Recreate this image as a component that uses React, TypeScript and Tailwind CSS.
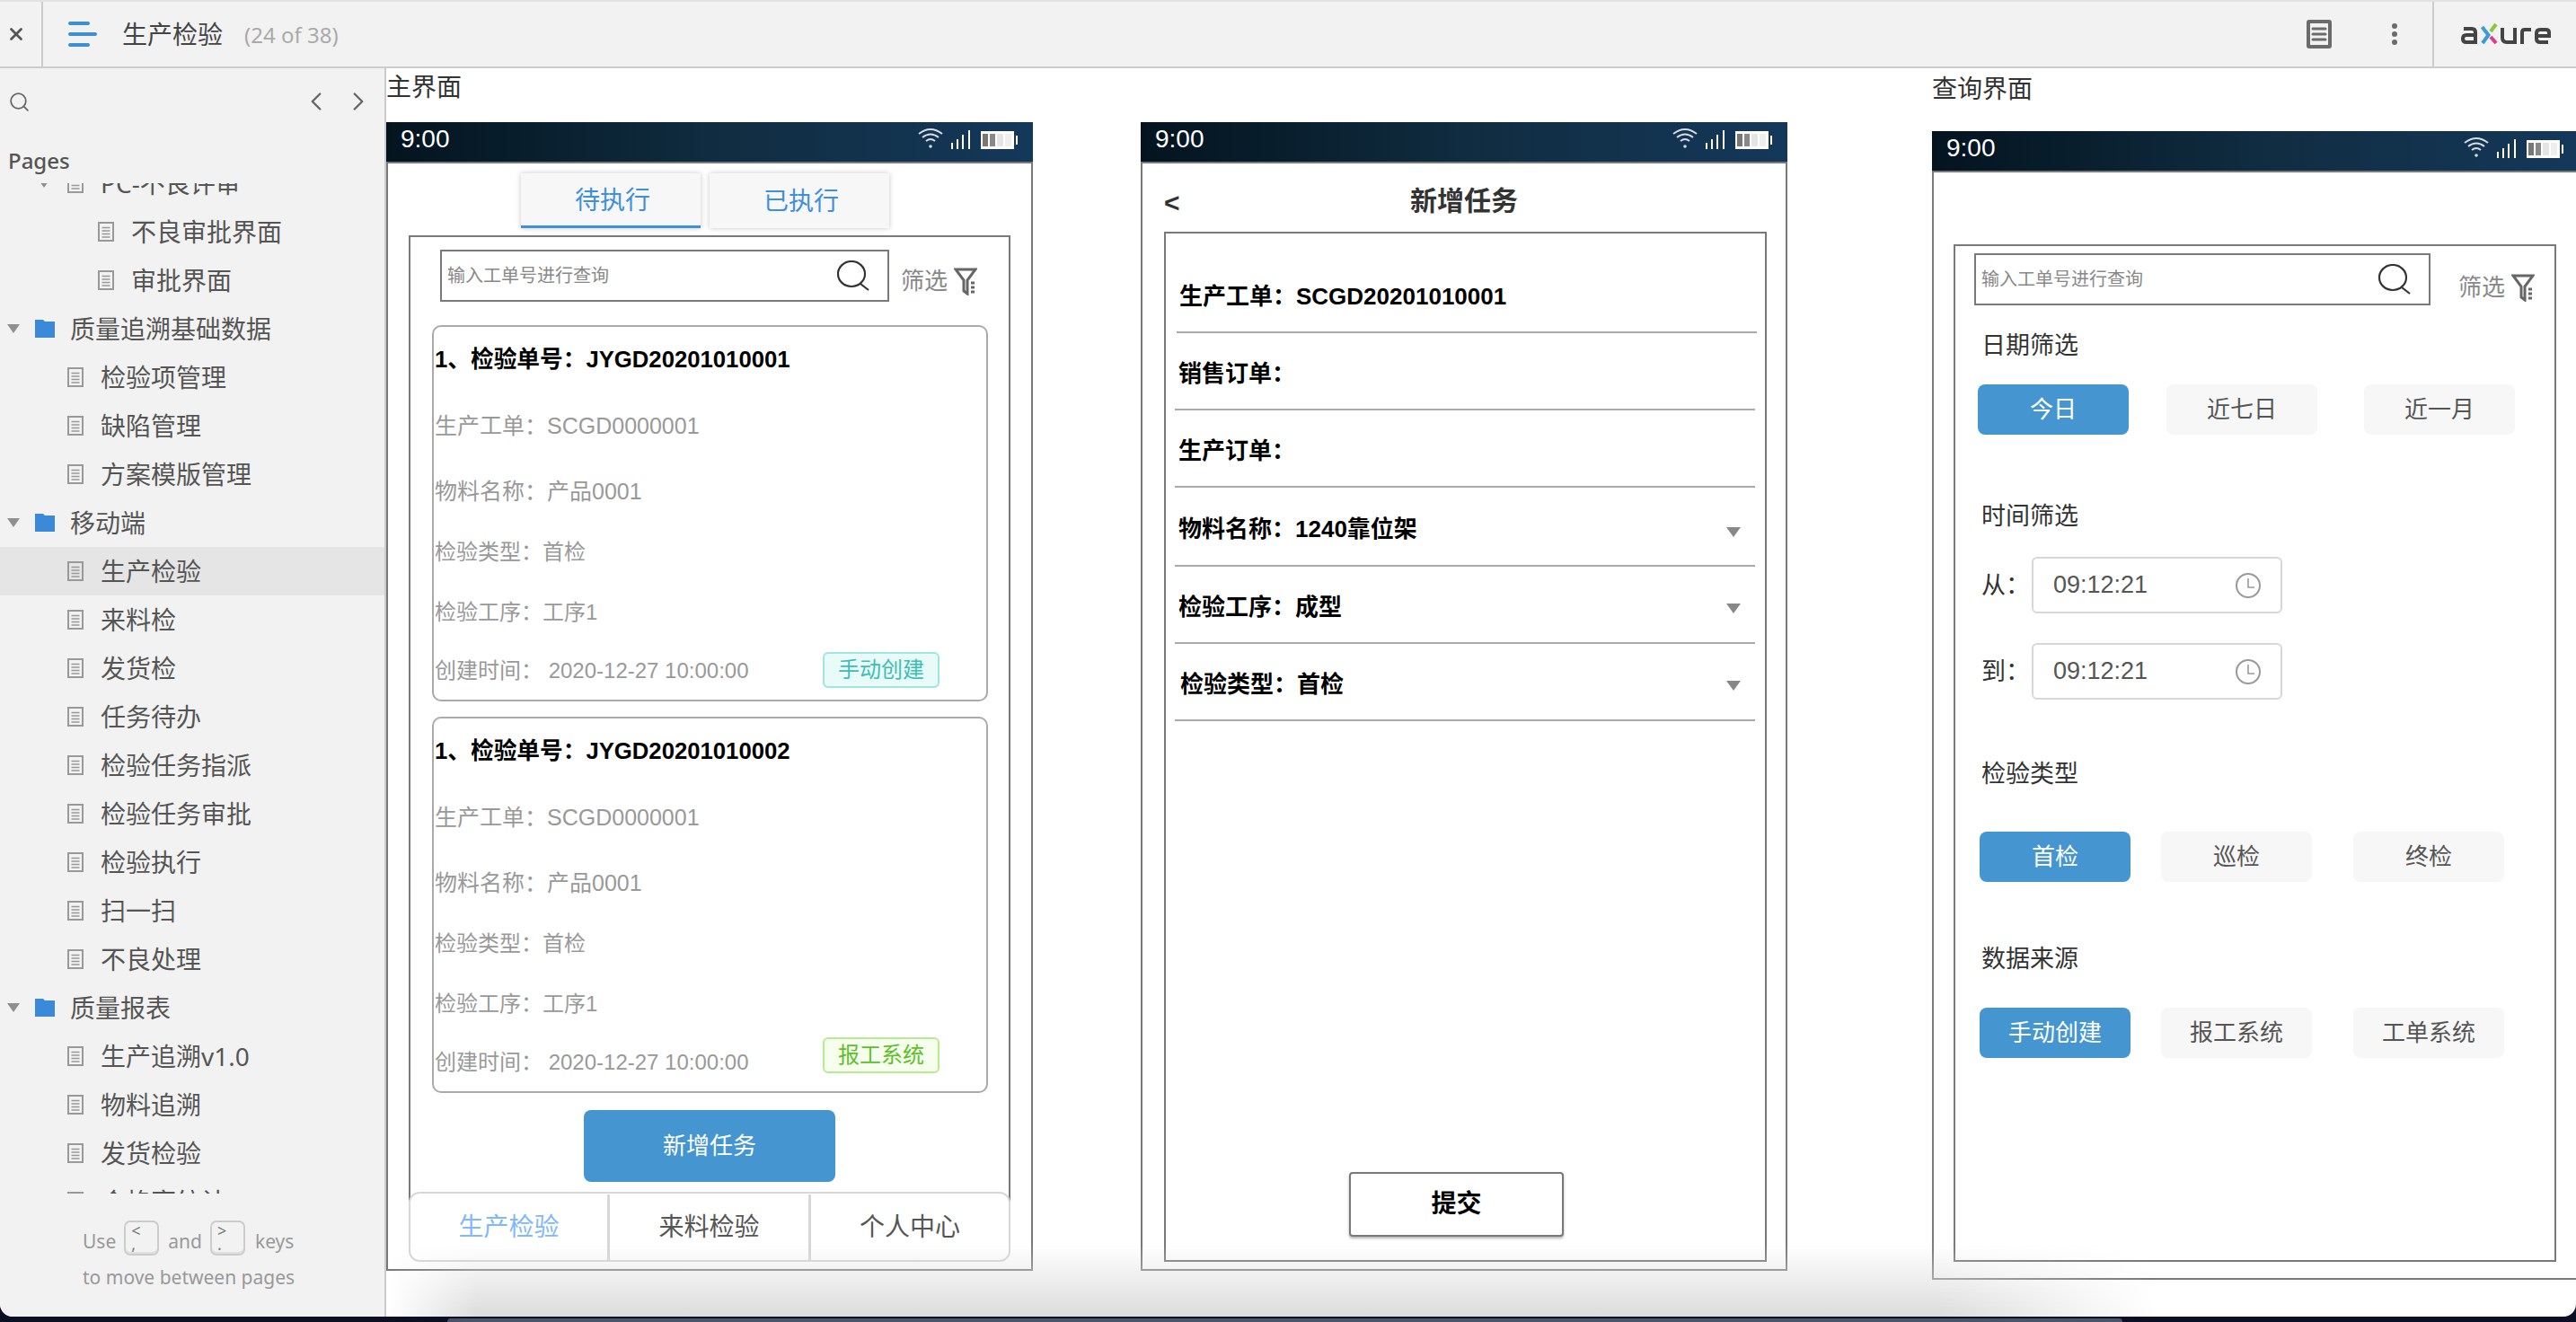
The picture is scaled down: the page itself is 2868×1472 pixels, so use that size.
import { ChevronLeft, ChevronRight, Search, X } from 'lucide-react'

const chromeFont = "font-['Noto_Sans','Noto_Sans_CJK_SC',sans-serif]"
const phoneFont = "font-['Liberation_Sans','Noto_Sans_CJK_SC',sans-serif]"

type Row = { label: string; kind: 'folder' | 'page' | 'sub' | 'branch'; active?: boolean }

const rows: Row[] = [
  { label: 'PC-不良评审', kind: 'branch' },
  { label: '不良审批界面', kind: 'sub' },
  { label: '审批界面', kind: 'sub' },
  { label: '质量追溯基础数据', kind: 'folder' },
  { label: '检验项管理', kind: 'page' },
  { label: '缺陷管理', kind: 'page' },
  { label: '方案模版管理', kind: 'page' },
  { label: '移动端', kind: 'folder' },
  { label: '生产检验', kind: 'page', active: true },
  { label: '来料检', kind: 'page' },
  { label: '发货检', kind: 'page' },
  { label: '任务待办', kind: 'page' },
  { label: '检验任务指派', kind: 'page' },
  { label: '检验任务审批', kind: 'page' },
  { label: '检验执行', kind: 'page' },
  { label: '扫一扫', kind: 'page' },
  { label: '不良处理', kind: 'page' },
  { label: '质量报表', kind: 'folder' },
  { label: '生产追溯v1.0', kind: 'page' },
  { label: '物料追溯', kind: 'page' },
  { label: '发货检验', kind: 'page' },
  { label: '合格率统计', kind: 'page' },
]

function DocIcon() {
  return (
    <svg width="18" height="22" viewBox="0 0 18 22" className="shrink-0">
      <rect x="1" y="1" width="16" height="20" fill="none" stroke="#999" strokeWidth="2" />
      <path d="M4.5 6.5h9M4.5 10h9M4.5 13.5h9M4.5 17h9" stroke="#999" strokeWidth="1.4" />
    </svg>
  )
}

function FolderIcon() {
  return (
    <svg width="22" height="20" viewBox="0 0 22 20" className="shrink-0">
      <path d="M0 0h9l2 2h11v18H0z" fill="#3b8ad9" />
    </svg>
  )
}

function Caret() {
  return <div className="h-0 w-0 shrink-0 border-x-[7px] border-t-[10px] border-x-transparent border-t-[#8f8f8f]" />
}

function TreeRow({ row }: { row: Row }) {
  return (
    <div className={`flex h-[54px] items-center text-[28px] leading-[40px] text-[#555] ${row.active ? 'bg-[#e5e5e5]' : ''}`}>
      {row.kind === 'folder' && (
        <div className="flex items-center pl-[8px]">
          <Caret />
          <div className="ml-[17px]"><FolderIcon /></div>
          <span className="ml-[17px] whitespace-nowrap">{row.label}</span>
        </div>
      )}
      {row.kind === 'page' && (
        <div className="flex items-center pl-[75px]">
          <DocIcon />
          <span className="ml-[19px] whitespace-nowrap">{row.label}</span>
        </div>
      )}
      {row.kind === 'branch' && (
        <div className="flex items-center pl-[42px]">
          <Caret />
          <div className="ml-[19px]"><DocIcon /></div>
          <span className="ml-[19px] whitespace-nowrap">{row.label}</span>
        </div>
      )}
      {row.kind === 'sub' && (
        <div className="flex items-center pl-[109px]">
          <DocIcon />
          <span className="ml-[19px] whitespace-nowrap">{row.label}</span>
        </div>
      )}
    </div>
  )
}

function KeyCap({ top, bottom }: { top: string; bottom: string }) {
  return (
    <div className="flex h-[39px] w-[39px] flex-col rounded-[7px] border-2 border-[#ccc] pl-[6px] text-[18px] leading-[15px] text-[#777] shadow-[inset_0_-2px_0_#e0e0e0]">
      <span className="mt-[2px]">{top}</span>
      <span>{bottom}</span>
    </div>
  )
}

function Sidebar() {
  return (
    <aside className={`flex h-full w-[430px] shrink-0 flex-col rounded-bl-[14px] border-r-2 border-[#ccc] bg-[#f2f2f2] ${chromeFont}`}>
      <div className="flex h-[72px] items-center pt-[2px] pl-[9px] text-[#666]">
        <Search size={25} strokeWidth={1.7} />
        <ChevronLeft size={34} strokeWidth={1.7} className="ml-[301px]" />
        <ChevronRight size={34} strokeWidth={1.7} className="ml-[13px]" />
      </div>
      <div className="flex h-[56px] items-start pl-[9px] text-[24px] leading-[56px] font-medium text-[#555]">
        <span className="mt-[3px]">Pages</span>
      </div>
      <div className="h-[1125px] shrink-0 overflow-hidden">
        <div className="-mt-[27px]">
          {rows.map((row) => (
            <TreeRow key={row.label} row={row} />
          ))}
        </div>
      </div>
      <div className="pt-[30px] pl-[92px] text-[21px] leading-[30px] text-[#999]">
        <div className="flex items-center whitespace-nowrap">
          <span className="mt-[6px]">Use</span>
          <div className="ml-[9px]"><KeyCap top="<" bottom="," /></div>
          <span className="mt-[6px] ml-[10px]">and</span>
          <div className="ml-[9px]"><KeyCap top=">" bottom="." /></div>
          <span className="mt-[6px] ml-[11px]">keys</span>
        </div>
        <div className="mt-[9px] whitespace-nowrap">to move between pages</div>
      </div>
    </aside>
  )
}

function AxureLogo() {
  return (
    <svg width="100" height="26" viewBox="0 0 100 26" fill="none" strokeWidth="4">
      <path d="M3 7h9q4 0 4 4v11H6q-4 0-4-4t4-4h10" stroke="#444" />
      <path d="M23.500 5l7 9-6.500 9" stroke="#3c9ad8" />
      <path d="M39 2l-6 8" stroke="#8cc63f" />
      <path d="M33 16l6 7" stroke="#e0388c" />
      <path d="M46 6v11q0 5 5 5h9V6" stroke="#444" />
      <path d="M68 24V11q0-3 3-3h7" stroke="#444" />
      <path d="M84 15h14v-4q0-3-4-3h-6q-4 0-4 4v6q0 4 4 4h9" stroke="#444" />
    </svg>
  )
}

function TopBar() {
  return (
    <header className={`flex h-[76px] shrink-0 items-center border-t-2 border-b-2 border-t-[#e2e2e2] border-b-[#ccc] bg-[#f2f2f2] ${chromeFont}`}>
      <div className="flex h-full w-[48px] items-center border-r-2 border-[#ccc] pl-[7px] text-[#555]">
        <X size={22} strokeWidth={3} />
      </div>
      <div className="ml-[28px] flex w-[32px] flex-col gap-[8px]">
        <div className="h-[4px] w-[24px] rounded-full bg-[#3d8fd1]" />
        <div className="h-[4px] w-[32px] rounded-full bg-[#3d8fd1]" />
        <div className="h-[4px] w-[24px] rounded-full bg-[#3d8fd1]" />
      </div>
      <span className="ml-[28px] text-[28px] leading-[40px] text-[#444]">生产检验</span>
      <span className="mt-[2px] ml-[24px] text-[24px] leading-[40px] text-[#aaa]">(24 of 38)</span>
      <div className="ml-auto flex h-full items-center">
        <svg width="28" height="32" viewBox="0 0 28 32">
          <rect x="2" y="2" width="24" height="28" rx="1" fill="none" stroke="#6b6b6b" strokeWidth="4" />
          <path d="M7 10h14M7 16h14M7 22h14" stroke="#6b6b6b" strokeWidth="3" strokeLinecap="round" />
        </svg>
        <div className="mr-[39px] ml-[67px] flex flex-col gap-[3px]">
          <div className="h-[6px] w-[6px] rounded-full bg-[#6b6b6b]" />
          <div className="h-[6px] w-[6px] rounded-full bg-[#6b6b6b]" />
          <div className="h-[6px] w-[6px] rounded-full bg-[#6b6b6b]" />
        </div>
        <div className="flex h-full w-[160px] items-center border-l-2 border-[#ccc] pl-[30px]">
          <AxureLogo />
        </div>
      </div>
    </header>
  )
}

function StatusBar() {
  return (
    <div className="flex h-[44px] w-[720px] items-center justify-between bg-gradient-to-r from-[#04141f] via-[#102c40] to-[#14385a] pr-[17px] pl-[16px]">
      <span className="-mt-[6px] text-[28px] leading-[32px] text-white">9:00</span>
      <div className="-mt-[8px] flex items-end">
        <svg width="28" height="24" viewBox="0 0 28 24" fill="none" stroke="#d5dde2" strokeWidth="2">
          <path d="M1 7q13-10 26 0M5 11q9-7 18 0M9 15q5-4 10 0" />
          <circle cx="14" cy="21" r="1.800" fill="#d5dde2" stroke="none" />
        </svg>
        <svg width="21" height="21" viewBox="0 0 21 21" className="ml-[9px]" fill="#fff">
          <rect x="0" y="14" width="2" height="7" />
          <rect x="6" y="10" width="2" height="11" />
          <rect x="12" y="5" width="2" height="16" />
          <rect x="19" y="0" width="2" height="21" />
        </svg>
        <svg width="41" height="20" viewBox="0 0 41 20" className="ml-[12px]">
          <rect x="0" y="0" width="37" height="20" fill="#fff" />
          <rect x="2" y="3" width="6" height="14" fill="#777" />
          <rect x="10" y="3" width="6" height="14" fill="#888" />
          <rect x="18" y="3" width="7" height="14" fill="#e4e4e4" />
          <rect x="27" y="3" width="7" height="14" fill="#eee" />
          <rect x="39" y="5" width="2" height="10" fill="#fff" />
        </svg>
      </div>
    </div>
  )
}

function SearchRow({ width, filterGap, filterDrop }: { width: string; filterGap: string; filterDrop: string }) {
  return (
    <div className="flex items-start">
      <div className={`flex h-[58px] items-center justify-between border-2 border-[#797979] pr-[20px] pl-[6px] ${width}`}>
        <span className="text-[20px] leading-[28px] text-[#888]">输入工单号进行查询</span>
        <svg width="36" height="34" viewBox="0 0 36 34" fill="none" stroke="#333" strokeWidth="2.200">
          <ellipse cx="16" cy="15" rx="15" ry="14" />
          <path d="M26 26l9 7" />
        </svg>
      </div>
      <div className={`flex items-center ${filterGap} ${filterDrop}`}>
        <span className="text-[26px] leading-[40px] text-[#888]">筛选</span>
        <svg width="26" height="31" viewBox="0 0 26 31" fill="none" stroke="#666" strokeWidth="3" className="ml-[7px]">
          <path d="M2 2h22L15 14v15l-4-3V14z" />
          <path d="M19 17h4M19 22h4M19 27h4" strokeWidth="3" />
        </svg>
      </div>
    </div>
  )
}

type CardProps = {
  no: string
  badge: string
  badgeClass: string
  gap: string
}

function TaskCard({ no, badge, badgeClass, gap }: CardProps) {
  return (
    <div className="w-[619px] rounded-[10px] border-2 border-[#aaa] pt-[16px] pl-[1px] text-[#999]">
      <div className="h-[40px] text-[25.7px] leading-[40px] font-bold whitespace-nowrap text-black">1、检验单号：{no}</div>
      <div className="mt-[34px] h-[40px] text-[25px] leading-[40px]">生产工单：SCGD0000001</div>
      <div className="mt-[33px] h-[40px] text-[25px] leading-[40px]">物料名称：产品0001</div>
      <div className="mt-[28px] h-[40px] text-[24px] leading-[40px]">检验类型：首检</div>
      <div className="mt-[27px] h-[40px] text-[24px] leading-[40px]">检验工序：工序1</div>
      <div className={`flex justify-between pr-[52px] ${gap}`}>
        <span className="h-[40px] text-[24px] leading-[40px] whitespace-nowrap">创建时间： 2020-12-27 10:00:00</span>
        <span className={`-mt-[1px] flex h-[40px] w-[130px] items-center justify-center rounded-[6px] border-2 text-[24px] leading-[32px] ${badgeClass}`}>{badge}</span>
      </div>
    </div>
  )
}

function HomePhone() {
  return (
    <div className={phoneFont}>
      <StatusBar />
      <div className="h-[1235px] w-[720px] border-2 border-[#797979] pt-[11px]">
        <div className="flex gap-[10px] pl-[148px]">
          <div className="flex h-[61px] w-[200px] items-center justify-center border-b-[3px] border-[#3d8fe0] bg-[#f7f7f7] pt-[4px] pl-[4px] text-[28px] text-[#3d8fe0] shadow-[0_0_6px_rgba(0,0,0,0.22)]">待执行</div>
          <div className="flex h-[61px] w-[200px] items-center justify-center bg-[#f7f7f7] pt-[2px] pl-[4px] text-[28px] text-[#3d8fe0] shadow-[0_0_6px_rgba(0,0,0,0.22)]">已执行</div>
        </div>
        <div className="mt-[8px] ml-[23px] h-[1078px] w-[670px] border-2 border-[#797979] pt-[14px]">
          <div className="ml-[33px]">
            <SearchRow width="w-[500px]" filterGap="ml-[13px]" filterDrop="mt-[15px]" />
          </div>
          <div className="mt-[26px] ml-[24px] flex flex-col gap-[17px]">
            <TaskCard no="JYGD20201010001" badge="手动创建" badgeClass="border-[#9fe6e0] bg-[#e8fbf9] text-[#3fbdb5]" gap="mt-[25px] pb-[12px]" />
            <TaskCard no="JYGD20201010002" badge="报工系统" badgeClass="-translate-y-[7px] border-[#b7eb8f] bg-[#f6ffed] text-[#5fbf2a]" gap="mt-[25px] pb-[12px]" />
          </div>
          <button className="mt-[19px] ml-[193px] flex h-[80px] w-[280px] items-center justify-center rounded-[8px] bg-[#4596d0] text-[26px] text-white">新增任务</button>
        </div>
        <div className="relative -mt-[13px] ml-[23px] flex h-[78px] w-[670px] rounded-[12px] border-2 border-[#d7d7d7] bg-white pt-[1px] text-[28px] text-[#555]">
          <div className="flex w-[222px] items-center justify-center border-r-[3px] border-[#d7d7d7] text-[#80b8ff]">生产检验</div>
          <div className="flex w-[224px] items-center justify-center border-r-[3px] border-[#d7d7d7]">来料检验</div>
          <div className="flex flex-1 items-center justify-center">个人中心</div>
        </div>
      </div>
    </div>
  )
}

const taskFields = [
  { label: '生产工单：SCGD20201010001', height: 'h-[111px] pt-[25px]', shift: 'ml-[12px] w-[646px]', text: 'pl-[3px]', drop: '' },
  { label: '销售订单：', height: 'h-[86px]', shift: 'ml-[10px] w-[646px]', text: 'pl-[4px]', drop: '' },
  { label: '生产订单：', height: 'h-[86px]', shift: 'ml-[10px] w-[646px]', text: 'pl-[4px]', drop: '' },
  { label: '物料名称：1240靠位架', height: 'h-[88px]', shift: 'ml-[10px] w-[646px]', text: 'pl-[4px]', drop: 'mt-[12px]' },
  { label: '检验工序：成型', height: 'h-[86px]', shift: 'ml-[10px] w-[646px]', text: 'pl-[4px]', drop: 'mt-[8px]' },
  { label: '检验类型：首检', height: 'h-[86px]', shift: 'ml-[10px] w-[646px]', text: 'pl-[6px]', drop: 'mt-[8px]' },
]

function CreatePhone() {
  return (
    <div className={phoneFont}>
      <StatusBar />
      <div className="h-[1235px] w-[720px] border-2 border-[#797979]">
        <div className="grid h-[76px] grid-cols-[1fr_auto_1fr] items-center px-[24px]">
          <span className="mt-[12px] text-[30px] leading-[40px] font-bold text-[#333]">&lt;</span>
          <span className="mt-[8px] text-[30px] leading-[40px] font-bold text-[#333]">新增任务</span>
          <span />
        </div>
        <div className="ml-[24px] flex h-[1147px] w-[671px] flex-col border-2 border-[#797979]">
          {taskFields.map((field) => (
            <div key={field.label} className={`flex shrink-0 items-center justify-between border-b-2 border-[#aaa] pr-[16px] text-[26px] leading-[40px] font-bold text-black ${field.height} ${field.shift} ${field.text}`}>
              <span className="translate-y-[3px]">{field.label}</span>
              {field.drop && <div className={`h-0 w-0 border-x-[8px] border-t-[11px] border-x-transparent border-t-[#888] ${field.drop}`} />}
            </div>
          ))}
          <button className="mt-auto mb-[26px] ml-[204px] flex h-[72px] w-[239px] items-center justify-center rounded-[4px] border-2 border-[#797979] bg-white text-[28px] font-bold text-black shadow-[0_2px_3px_rgba(0,0,0,0.3)]">提交</button>
        </div>
      </div>
    </div>
  )
}

function Chip({ label, active }: { label: string; active?: boolean }) {
  return (
    <div className={`flex h-[56px] w-[168px] items-center justify-center rounded-[8px] text-[26px] ${active ? 'bg-[#4596d0] text-white' : 'bg-[#f7f7f7] text-[#555]'}`}>
      {label}
    </div>
  )
}

function TimeField({ label, className }: { label: string; className: string }) {
  return (
    <div className={`ml-[29px] flex items-center ${className}`}>
      <span className="w-[56px] text-[27px] leading-[40px] text-[#333]">{label}</span>
      <div className="flex h-[63px] w-[279px] items-center justify-between rounded-[6px] border-2 border-[#d7d7d7] pr-[22px] pl-[22px] text-[27px] text-[#555]">
        <span>09:12:21</span>
        <svg width="28" height="28" viewBox="0 0 28 28" fill="none" stroke="#999" strokeWidth="2">
          <circle cx="14" cy="14" r="13" />
          <path d="M14 6v10h7" strokeWidth="1.600" />
        </svg>
      </div>
    </div>
  )
}

function SectionLabel({ label, className }: { label: string; className: string }) {
  return <div className={`ml-[29px] h-[40px] translate-y-[2px] text-[27px] leading-[40px] text-[#333] ${className}`}>{label}</div>
}

function QueryPhone() {
  return (
    <div className={phoneFont}>
      <StatusBar />
      <div className="h-[1235px] w-[720px] border-2 border-[#797979] pt-[80px]">
        <div className="ml-[22px] h-[1133px] w-[671px] border-2 border-[#797979] pt-[8px]">
          <div className="ml-[21px]">
            <SearchRow width="w-[508px]" filterGap="ml-[31px]" filterDrop="mt-[18px]" />
          </div>
          <SectionLabel label="日期筛选" className="mt-[23px]" />
          <div className="mt-[25px] ml-[25px] flex">
            <Chip label="今日" active />
            <div className="ml-[42px]"><Chip label="近七日" /></div>
            <div className="ml-[52px]"><Chip label="近一月" /></div>
          </div>
          <SectionLabel label="时间筛选" className="mt-[69px]" />
          <TimeField label="从：" className="mt-[27px]" />
          <TimeField label="到：" className="mt-[33px]" />
          <SectionLabel label="检验类型" className="mt-[61px]" />
          <div className="mt-[46px] ml-[27px] flex">
            <Chip label="首检" active />
            <div className="ml-[34px]"><Chip label="巡检" /></div>
            <div className="ml-[46px]"><Chip label="终检" /></div>
          </div>
          <SectionLabel label="数据来源" className="mt-[64px]" />
          <div className="mt-[36px] ml-[27px] flex">
            <Chip label="手动创建" active />
            <div className="ml-[34px]"><Chip label="报工系统" /></div>
            <div className="ml-[46px]"><Chip label="工单系统" /></div>
          </div>
        </div>
      </div>
    </div>
  )
}

export default function App() {
  return (
    <div className="h-[1472px] w-[2868px] overflow-hidden bg-[#0a0f24]">
      <div className="relative flex h-[1466px] flex-col overflow-hidden rounded-b-[14px] bg-white">
        <TopBar />
        <div className="flex min-h-0 flex-1">
          <Sidebar />
          <main className="flex min-w-0 flex-1">
            <div className="w-[720px] shrink-0">
              <div className="h-[60px] text-[28px] leading-[38px] text-[#333] font-['Noto_Sans_CJK_SC',sans-serif]">主界面</div>
              <HomePhone />
            </div>
            <div className="ml-[120px] w-[720px] shrink-0 pt-[60px]">
              <CreatePhone />
            </div>
            <div className="ml-[161px] w-[720px] shrink-0">
              <div className="h-[70px] pt-[2px] text-[28px] leading-[38px] text-[#333] font-['Noto_Sans_CJK_SC',sans-serif]">查询界面</div>
              <QueryPhone />
            </div>
          </main>
        </div>
        {/* window shadow along the bottom edge */}
        <div className="pointer-events-none absolute right-[470px] bottom-0 left-[432px] h-[80px] bg-gradient-to-t from-[#dcdcdc] to-transparent [mask-image:linear-gradient(to_right,transparent,black_5%,black_88%,transparent)]" />
      </div>
      <div className="ml-[498px] h-[4px] w-[1865px] translate-y-[2px] rounded-t-[10px] bg-[#4a5468]" />
    </div>
  )
}
